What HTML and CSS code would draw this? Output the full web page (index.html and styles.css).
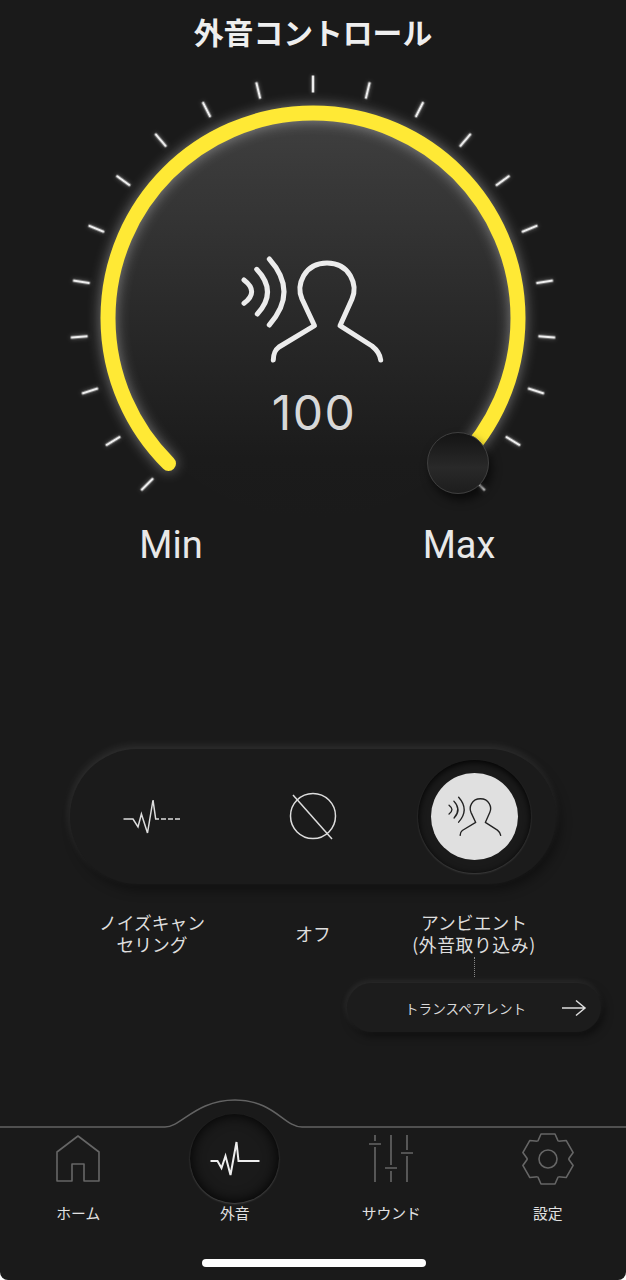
FILE: index.html
```html
<!DOCTYPE html>
<html lang="ja">
<head>
    <meta charset="UTF-8">
    <meta name="viewport" content="width=device-width, initial-scale=1.0">
    <title>外音コントロール</title>
    <link rel="stylesheet" href="styles.css">
</head>
<body>
    <div class="screen">
        <h1 class="title">外音コントロール</h1>

        <div class="dial">
            <svg class="dial-art" width="626" height="444" viewBox="0 66 626 444">
                <defs>
                    <linearGradient id="disk-fill" x1="0" y1="0" x2="0" y2="1">
                        <stop offset="0" stop-color="#3f3f3f"/>
                        <stop offset="0.45" stop-color="#2b2b2b"/>
                        <stop offset="0.85" stop-color="#1b1b1b"/>
                        <stop offset="1" stop-color="#1a1a1a"/>
                    </linearGradient>
                </defs>
                <circle cx="313" cy="318.5" r="199" fill="url(#disk-fill)"/>
                <g class="ticks">
                    <line x1="313" y1="75.5" x2="313" y2="92.5" transform="rotate(-135 313 318.5)"/>
                    <line x1="313" y1="75.5" x2="313" y2="92.5" transform="rotate(-121.5 313 318.5)"/>
                    <line x1="313" y1="75.5" x2="313" y2="92.5" transform="rotate(-108 313 318.5)"/>
                    <line x1="313" y1="75.5" x2="313" y2="92.5" transform="rotate(-94.5 313 318.5)"/>
                    <line x1="313" y1="75.5" x2="313" y2="92.5" transform="rotate(-81 313 318.5)"/>
                    <line x1="313" y1="75.5" x2="313" y2="92.5" transform="rotate(-67.5 313 318.5)"/>
                    <line x1="313" y1="75.5" x2="313" y2="92.5" transform="rotate(-54 313 318.5)"/>
                    <line x1="313" y1="75.5" x2="313" y2="92.5" transform="rotate(-40.5 313 318.5)"/>
                    <line x1="313" y1="75.5" x2="313" y2="92.5" transform="rotate(-27 313 318.5)"/>
                    <line x1="313" y1="75.5" x2="313" y2="92.5" transform="rotate(-13.5 313 318.5)"/>
                    <line x1="313" y1="75.5" x2="313" y2="92.5"/>
                    <line x1="313" y1="75.5" x2="313" y2="92.5" transform="rotate(13.5 313 318.5)"/>
                    <line x1="313" y1="75.5" x2="313" y2="92.5" transform="rotate(27 313 318.5)"/>
                    <line x1="313" y1="75.5" x2="313" y2="92.5" transform="rotate(40.5 313 318.5)"/>
                    <line x1="313" y1="75.5" x2="313" y2="92.5" transform="rotate(54 313 318.5)"/>
                    <line x1="313" y1="75.5" x2="313" y2="92.5" transform="rotate(67.5 313 318.5)"/>
                    <line x1="313" y1="75.5" x2="313" y2="92.5" transform="rotate(81 313 318.5)"/>
                    <line x1="313" y1="75.5" x2="313" y2="92.5" transform="rotate(94.5 313 318.5)"/>
                    <line x1="313" y1="75.5" x2="313" y2="92.5" transform="rotate(108 313 318.5)"/>
                    <line x1="313" y1="75.5" x2="313" y2="92.5" transform="rotate(121.5 313 318.5)"/>
                    <line x1="313" y1="75.5" x2="313" y2="92.5" transform="rotate(135 313 318.5)"/>
                </g>
                <path class="arc" d="M168.5 463.5 A205 205 0 1 1 457.5 463.5"/>
            </svg>

            <div class="dial-center">
                <svg class="ambient-big" width="180" height="140" viewBox="0 0 180 140">
                    <symbol id="ambient" viewBox="0 0 180 140">
                        <path d="M24 40 Q39.3 51.7 24 63.3 M36.7 29.3 Q58 51.7 37.3 74 M49.3 19 Q78.7 51.7 49.3 85"/>
                        <path d="M53.3 120 C53.5 113 55 110 59 107 L94.5 85.7 L82 59 C76 45 84 23 107 23 C130 23 138 45 132 59 L120 85.7 L152 106 C157 110 160 114 160.7 120"/>
                    </symbol>
                    <use href="#ambient"/>
                </svg>
                <div class="level">100</div>
            </div>

            <div class="knob"></div>
        </div>

        <div class="range">
            <span>Min</span>
            <span>Max</span>
        </div>

        <div class="modes">
            <div class="mode">
                <svg class="line-icon" width="58" height="36" viewBox="0 0 58 36">
                    <path d="M0.5 20 H10 L15 28 L18.4 15 L24.5 34 L30 1 L32.7 20 H36 M38 20 H43 M45 20 H50 M52 20 H57"/>
                </svg>
            </div>
            <div class="mode">
                <svg class="line-icon" width="52" height="52" viewBox="0 0 52 52">
                    <circle cx="26" cy="25" r="22.5"/>
                    <path d="M6 4 L45 48"/>
                </svg>
            </div>
            <div class="mode">
                <div class="mode-ring">
                    <div class="mode-on">
                        <svg class="ambient-small" width="68" height="53" viewBox="0 0 180 140">
                            <use href="#ambient"/>
                        </svg>
                    </div>
                </div>
            </div>
        </div>

        <div class="mode-labels">
            <div>ノイズキャン<br>セリング</div>
            <div>オフ</div>
            <div>アンビエント<br><span class="parens">(外音取り込み)</span></div>
        </div>

        <div class="dots"></div>
        <div class="sub-button">
            <span>トランスペアレント</span>
            <svg class="line-icon" width="26" height="20" viewBox="0 0 26 20">
                <path d="M1 10 H24 M15 2.5 L24 10 L15 17.5"/>
            </svg>
        </div>

        <div class="footer">
            <svg class="footer-line" width="626" height="30" viewBox="0 0 626 30">
                <path d="M0 28 H165 C181 28 196 1 235 1 C274 1 284 28 302 28 H626"/>
            </svg>
            <div class="tabs">
                <div class="tab">
                    <div class="tab-icon">
                        <svg class="tab-svg" width="44" height="48" viewBox="0 0 44 48">
                            <path d="M22 1 L1 17 V46 H16 V29 H28 V46 H43 V17 Z"/>
                        </svg>
                    </div>
                    <span>ホーム</span>
                </div>
                <div class="tab">
                    <div class="tab-icon tab-active">
                        <svg class="tab-wave" width="50" height="36" viewBox="0 0 50 36">
                            <path d="M0.5 20 H7.5 L11.5 27 L15.5 15 L20.5 34 L26.5 1 L28.5 20 H49.5"/>
                        </svg>
                    </div>
                    <span>外音</span>
                </div>
                <div class="tab">
                    <div class="tab-icon">
                        <svg class="tab-svg" width="48" height="50" viewBox="0 0 48 50">
                            <path d="M8 1 V7 M8 13 V48 M2 10 H14 M24 1 V31 M24 37 V48 M18 34 H30 M40 1 V16 M40 22 V48 M34 19 H46"/>
                        </svg>
                    </div>
                    <span>サウンド</span>
                </div>
                <div class="tab">
                    <div class="tab-icon">
                        <svg class="tab-svg" width="54" height="54" viewBox="-27 -27 54 54">
                            <path id="tooth" d="M-10.2 -17.8 L-7 -25 H7 L10.2 -17.8"/>
                            <use href="#tooth" transform="rotate(60)"/>
                            <use href="#tooth" transform="rotate(120)"/>
                            <use href="#tooth" transform="rotate(180)"/>
                            <use href="#tooth" transform="rotate(240)"/>
                            <use href="#tooth" transform="rotate(300)"/>
                            <circle r="9"/>
                        </svg>
                    </div>
                    <span>設定</span>
                </div>
            </div>
            <div class="home-bar"></div>
        </div>
    </div>
</body>
</html>
```

FILE: styles.css
```css
body {
    margin: 0;
    background-color: #ffffff;
    color: #e2e2e2;
    font-family: "Noto Sans CJK JP", "Noto Sans", sans-serif;
}
.screen {
    width: 626px;
    height: 1280px;
    display: flex;
    flex-direction: column;
    overflow: hidden;
    background-color: #1a1a1a;
    border-radius: 0 0 8px 8px;
}
.title {
    margin: 0;
    height: 66px;
    line-height: 62px;
    font-size: 29.8px;
    font-weight: 700;
    text-align: center;
    color: #eeeeee;
}

/* dial */
.dial {
    position: relative;
    height: 444px;
}
.dial-art {
    display: block;
    overflow: visible;
}
.ticks line {
    stroke: #eeeeee;
    stroke-width: 2.6;
    filter: drop-shadow(0 0 2px rgba(255,255,255,0.35));
}
.arc {
    fill: none;
    stroke: #ffe935;
    stroke-width: 15;
    stroke-linecap: round;
    filter: drop-shadow(0 0 7px rgba(255,255,255,0.42));
}
.dial-center {
    position: absolute;
    left: 220px;
    top: 174px;
    width: 180px;
    text-align: center;
}
.ambient-big {
    display: block;
    fill: none;
    stroke: #ececec;
    stroke-width: 5;
    stroke-linecap: round;
    stroke-linejoin: round;
}
.level {
    font-family: Inter, sans-serif;
    font-weight: 400;
    font-size: 48px;
    line-height: 54px;
    letter-spacing: 1.5px;
    padding-left: 8px;
    color: #d8d8d8;
    margin-top: 6px;
}
.knob {
    position: absolute;
    left: 427px;
    top: 366px;
    width: 62px;
    height: 62px;
    box-sizing: border-box;
    border-radius: 50%;
    border: 1px solid #3f3f3f;
    background: linear-gradient(#141414, #292929 58%, #1d1d1d);
    box-shadow: 3px 6px 10px rgba(0,0,0,0.6);
}
.range {
    margin-top: 10px;
    height: 50px;
    line-height: 50px;
    display: grid;
    grid-template-columns: 100px 100px;
    justify-content: space-between;
    padding: 0 117px 0 121px;
    text-align: center;
    font-family: Roboto, sans-serif;
    font-size: 38px;
    color: #e8e8e8;
}

/* mode switch */
.modes {
    margin: 179px 0 0 70px;
    width: 486px;
    height: 135px;
    border-radius: 68px;
    background-color: #1b1b1b;
    box-shadow: -1px -3px 9px rgba(255,255,255,0.1), 4px 6px 12px rgba(0,0,0,0.4);
    display: grid;
    grid-template-columns: repeat(3, 161px);
    justify-content: center;
}
.mode {
    display: flex;
    align-items: center;
    justify-content: center;
}
.line-icon {
    fill: none;
    stroke: #dddddd;
    stroke-width: 1.5;
}
.mode-ring {
    width: 113px;
    height: 113px;
    border-radius: 50%;
    background-color: #1a1a1a;
    box-shadow: inset 0 2px 7px rgba(0,0,0,0.95), 0 1px 2px rgba(255,255,255,0.16);
    display: flex;
    align-items: center;
    justify-content: center;
    flex-shrink: 0;
}
.mode-on {
    width: 87px;
    height: 87px;
    border-radius: 50%;
    background-color: #e0e0e0;
    display: flex;
    align-items: center;
    justify-content: center;
}
.ambient-small {
    fill: none;
    stroke: #222222;
    stroke-width: 3.6;
    stroke-linecap: round;
    stroke-linejoin: round;
}
.mode-labels {
    margin-top: 27px;
    display: grid;
    grid-template-columns: repeat(3, 161px);
    justify-content: center;
    align-items: center;
    text-align: center;
    font-size: 17.8px;
    line-height: 22px;
    color: #dedede;
}
.parens {
    letter-spacing: 0.6px;
}
.dots {
    margin: 2px 0 0 474px;
    width: 0;
    height: 20px;
    border-left: 1px dotted #888888;
}
.sub-button {
    margin: 6px 0 0 347px;
    width: 254px;
    height: 49px;
    box-sizing: border-box;
    padding: 0 14px 0 58px;
    border-radius: 25px;
    background-color: #1c1c1c;
    box-shadow: -1px -2px 7px rgba(255,255,255,0.09), 3px 4px 8px rgba(0,0,0,0.5);
    display: flex;
    align-items: center;
    justify-content: space-between;
    font-size: 13.6px;
    color: #d8d8d8;
}

/* bottom nav */
.footer {
    position: relative;
    margin-top: auto;
    height: 181px;
    box-sizing: border-box;
    padding-top: 15px;
}
.footer-line {
    position: absolute;
    left: 0;
    top: 0;
    fill: none;
    stroke: #636363;
    stroke-width: 1.5;
}
.tabs {
    position: relative;
    display: grid;
    grid-template-columns: repeat(4, 156.5px);
}
.tab {
    display: flex;
    flex-direction: column;
    align-items: center;
    font-size: 14.8px;
    line-height: 20px;
    color: #e2e2e2;
}
.tab-icon {
    width: 89px;
    height: 89px;
    display: flex;
    align-items: center;
    justify-content: center;
}
.tab-active {
    border-radius: 50%;
    background-color: #1a1a1a;
    box-shadow: inset 0 0 14px #000, 0 1px 2px rgba(255,255,255,0.22);
}
.tab-svg {
    fill: none;
    stroke: #666666;
    stroke-width: 1.6;
    stroke-linejoin: round;
}
.tab-wave {
    fill: none;
    stroke: #eeeeee;
    stroke-width: 2;
}
.home-bar {
    position: relative;
    width: 224px;
    height: 8px;
    margin: 36px 0 0 202px;
    border-radius: 4px;
    background-color: #ffffff;
}
```
